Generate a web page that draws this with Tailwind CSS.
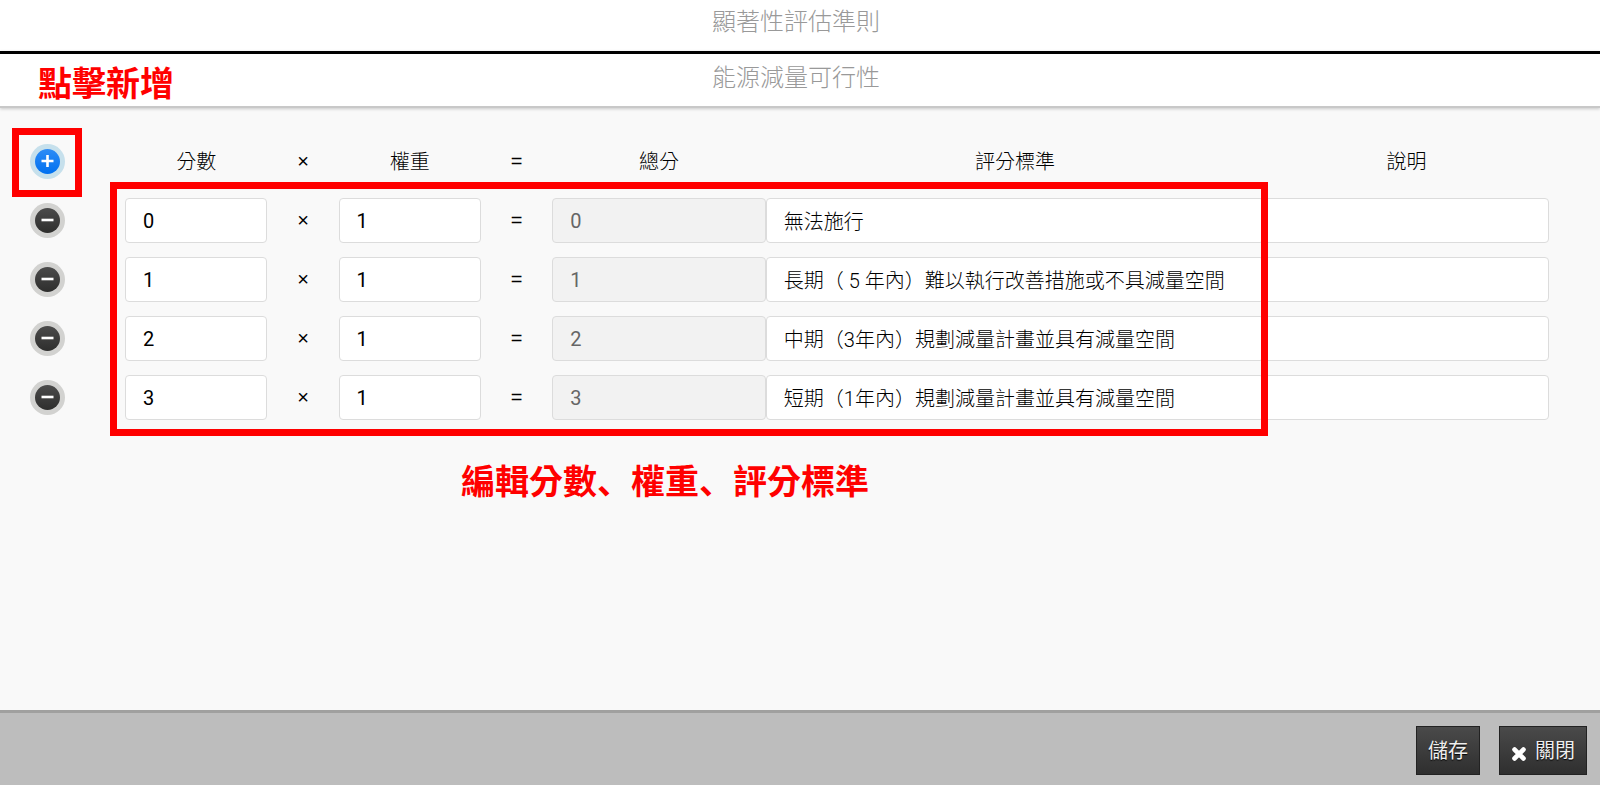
<!DOCTYPE html>
<html lang="zh-Hant">

<head>
  <meta charset="UTF-8">
  <meta name="viewport" content="width=device-width, initial-scale=1.0">
  <title>顯著性評估準則</title>
  <script src="https://cdn.jsdelivr.net/npm/@tailwindcss/browser@4"></script>
</head>

<body class="relative min-h-screen flex flex-col bg-[#f9f9f9] text-black text-xl font-light font-['Liberation_Sans','Noto_Sans_CJK_TC',sans-serif]">
  <header class="bg-white text-2xl text-[#999] text-center">
    <h1 class="h-[51px] pr-2 leading-[44px]">顯著性評估準則</h1>
    <h2 class="h-[57px] pr-2 leading-[48px] border-t-3 border-black border-b-2 border-b-[#c8c8c8] shadow-[0_1px_3px_rgba(0,0,0,0.2)]">能源減量可行性</h2>
  </header>

  <main class="relative flex-1 pt-[31px] pr-[51px]">
    <div class="flex items-center h-[45px]">
      <div class="w-[94px] mr-[31px] flex justify-center">
        <button type="button" id="addBtn" aria-label="新增" class="size-[35px]">
          <svg viewBox="0 0 35 35" class="size-full">
            <defs>
              <linearGradient id="blue" x1="0" y1="0" x2="0" y2="1">
                <stop offset="0" stop-color="#2e8cf5" />
                <stop offset="1" stop-color="#0070f0" />
              </linearGradient>
              <linearGradient id="dark" x1="0" y1="0" x2="0" y2="1">
                <stop offset="0" stop-color="#4b4b4b" />
                <stop offset="1" stop-color="#2e2e2d" />
              </linearGradient>
            </defs>
            <circle cx="17.5" cy="17.5" r="17.5" fill="#c6e0ec" />
            <circle cx="17.5" cy="17.5" r="12.5" fill="url(#blue)" />
            <path d="M11.5 17H23.5M17.5 11V23" stroke="#fff" stroke-width="2.6" />
          </svg>
        </button>
      </div>
      <div class="flex-1 grid grid-cols-[2fr_1fr_2fr_1fr_3fr_7fr_4fr] items-center text-center">
        <span id="score">分數</span>
        <span class="pb-0.5">×</span>
        <span id="weight">權重</span>
        <span class="pb-0.5">=</span>
        <span id="total">總分</span>
        <span id="criteria">評分標準</span>
        <span id="note">說明</span>
      </div>
    </div>

    <div id="rows">
      <!-- Score rows will be inserted here -->
    </div>

    <!-- Guide marks -->
    <p class="absolute left-[38px] -top-12 text-[34px] leading-[48px] font-bold text-[#f00]">點擊新增</p>
    <div class="absolute left-3 top-5 w-[70px] h-[69px] border-7 border-[#f00] pointer-events-none"></div>
    <div class="absolute left-[110px] right-[calc(20%+12px)] top-[74px] h-[254px] border-7 border-[#f00] pointer-events-none"></div>
    <p class="absolute left-[461px] top-[348px] text-[34px] leading-[48px] font-bold text-[#f00]">編輯分數<span lang="zh-Hans" class="font-['Noto_Sans_CJK_SC',sans-serif]">、</span>權重<span lang="zh-Hans" class="font-['Noto_Sans_CJK_SC',sans-serif]">、</span>評分標準</p>
  </main>

  <footer class="h-[75px] pt-[13px] pr-[13px] flex items-start justify-end gap-[19px] bg-[#bdbdbd] border-t-3 border-[#a0a09f]">
    <button type="button"
      class="h-[49px] px-[11px] border border-[#222] bg-linear-to-b from-[#4a4a4a] to-[#2f2f2f] text-[#eee] font-normal text-shadow-[0_1px_1px_#000]">儲存</button>
    <button type="button"
      class="h-[49px] px-[11px] flex items-center gap-2 border border-[#222] bg-linear-to-b from-[#4a4a4a] to-[#2f2f2f] text-[#eee] font-normal text-shadow-[0_1px_1px_#000]">
      <svg viewBox="0 0 16 16" class="size-4 mt-1.5">
        <path d="M3.6 3.6L12.4 12.4M12.4 3.6L3.6 12.4" stroke="#fff" stroke-width="4.8" stroke-linecap="round" />
      </svg>
      關閉
    </button>
  </footer>

  <script>
    const criteria = [
      { score: 0, weight: 1, text: "無法施行" },
      { score: 1, weight: 1, text: "長期（ 5 年內）難以執行改善措施或不具減量空間" },
      { score: 2, weight: 1, text: "中期（3年內）規劃減量計畫並具有減量空間" },
      { score: 3, weight: 1, text: "短期（1年內）規劃減量計畫並具有減量空間" }
    ];

    const rows = document.getElementById('rows');

    function addRow(item) {
      const row = document.createElement('div');
      row.className = 'flex items-center mt-[14px]';
      row.innerHTML = `
      <div class="w-[94px] mr-[31px] flex justify-center">
        <button type="button" aria-label="刪除" class="remove size-[35px]">
          <svg viewBox="0 0 35 35" class="size-full">
            <circle cx="17.5" cy="17.5" r="17.5" fill="#d2d2d0" />
            <circle cx="17.5" cy="17.5" r="12.5" fill="url(#dark)" />
            <path d="M11.5 17H23.5" stroke="#fff" stroke-width="2.6" />
          </svg>
        </button>
      </div>
      <div class="flex-1 grid grid-cols-[2fr_1fr_2fr_1fr_3fr_7fr_4fr] items-center text-center">
        <input aria-labelledby="score" value="${item.score}" class="score min-w-0 h-[45px] px-[17px] bg-white border border-[#dcdcdc] rounded font-['Roboto',sans-serif] font-normal">
        <span class="pb-0.5">×</span>
        <input aria-labelledby="weight" value="${item.weight}" class="weight min-w-0 h-[45px] px-[17px] bg-white border border-[#dcdcdc] rounded font-['Roboto',sans-serif] font-normal">
        <span class="pb-0.5">=</span>
        <input aria-labelledby="total" readonly value="${item.score * item.weight}" class="total min-w-0 h-[45px] px-[17px] bg-[#f2f2f2] text-[#666] border border-[#dcdcdc] rounded font-['Roboto',sans-serif] font-normal">
        <input aria-labelledby="criteria" value="${item.text}" class="min-w-0 h-[45px] px-[17px] bg-white border border-[#dcdcdc] rounded font-['Roboto','Noto_Sans_CJK_TC',sans-serif]">
        <input aria-labelledby="note" class="min-w-0 h-[45px] px-[17px] bg-white border border-[#dcdcdc] rounded font-['Roboto','Noto_Sans_CJK_TC',sans-serif]">
      </div>`;

      const score = row.querySelector('.score');
      const weight = row.querySelector('.weight');
      row.addEventListener('input', () => {
        row.querySelector('.total').value = score.value * weight.value || 0;
      });
      row.querySelector('.remove').addEventListener('click', () => row.remove());
      rows.appendChild(row);
    }

    document.getElementById('addBtn').addEventListener('click', () => {
      addRow({ score: 0, weight: 1, text: "" });
    });

    // Initial load
    criteria.forEach(addRow);
  </script>
</body>

</html>
